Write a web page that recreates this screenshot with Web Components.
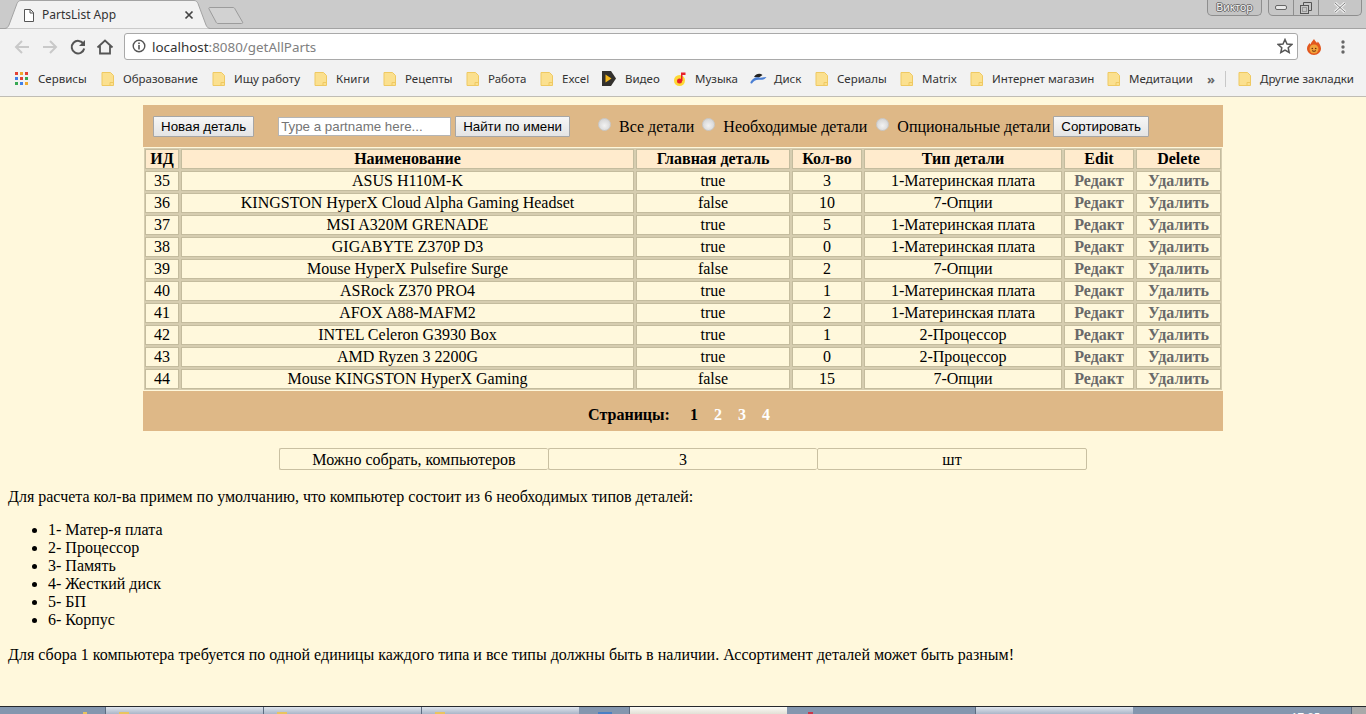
<!DOCTYPE html>
<html lang="ru">
<head>
<meta charset="utf-8">
<title>PartsList App</title>
<style>
    html, body { margin: 0; height: 100%; overflow: hidden; }
</style>
</head>
<body>
<app-shell>
    <browser-chrome slot="top"></browser-chrome>
    <parts-panel></parts-panel>
    <parts-table></parts-table>
    <pager-bar></pager-bar>
    <summary-table></summary-table>
    <info-text></info-text>
    <task-bar slot="bottom"></task-bar>
</app-shell>

<script>
const FOLDER = `<svg width="13" height="14" viewBox="0 0 13 14"><path d="M1 .5h8.5l3 3v10H1z" fill="#fbe08f" stroke="#efc962"/><path d="M9 13.5v-3h3.5" fill="none" stroke="#efc962"/></svg>`;

const BOOKMARK_ICONS = {
    folder: { svg: FOLDER, gap: 9 },
    apps: { svg: `<svg width="13" height="13" viewBox="0 0 13 13"><rect x="0" y="0" width="3" height="3" fill="#e24234"/><rect x="5" y="0" width="3" height="3" fill="#f0a92e"/><rect x="10" y="0" width="3" height="3" fill="#e24234"/><rect x="0" y="5" width="3" height="3" fill="#3f7fe8"/><rect x="5" y="5" width="3" height="3" fill="#e24234"/><rect x="10" y="5" width="3" height="3" fill="#37a853"/><rect x="0" y="10" width="3" height="3" fill="#37a853"/><rect x="5" y="10" width="3" height="3" fill="#3f7fe8"/><rect x="10" y="10" width="3" height="3" fill="#f0a92e"/></svg>`, gap: 10 },
    video: { svg: `<svg width="15" height="15" viewBox="0 0 15 15"><path d="M1 0h9l5 7.500-5 7.500H1z" fill="#33312e"/><path d="M4.500 3.500l6 4-6 4z" fill="#f5b81c"/></svg>`, gap: 9 },
    music: { svg: `<svg width="15" height="15" viewBox="0 0 15 15"><circle cx="6.500" cy="9.500" r="5.500" fill="#fdd835"/><circle cx="6.500" cy="10" r="2.500" fill="#e8202a"/><path d="M8 10V1.500h4.500V4H9.500v6z" fill="#e8202a"/></svg>`, gap: 7 },
    disk: { svg: `<svg width="17" height="11" viewBox="0 0 17 11"><path d="M4 4C6 .5 10 0 12.500 2L9 4.500z" fill="#222"/><path d="M.5 9C2.500 4.500 7 3.500 9 4.500 11 5.300 13.500 4 16.500 4 15 6.500 12 7 9.500 6.800 6 6.500 3.500 8 2 10.500 1 10.800.2 10 .5 9z" fill="#4a7fd4"/></svg>`, gap: 7 }
};

// [подпись, иконка, ширина элемента]
const BOOKMARKS = [
    ['Сервисы', 'apps', 86],
    ['Образование', 'folder', 111],
    ['Ищу работу', 'folder', 102],
    ['Книги', 'folder', 69],
    ['Рецепты', 'folder', 83],
    ['Работа', 'folder', 74],
    ['Excel', 'folder', 61],
    ['Видео', 'video', 72],
    ['Музыка', 'music', 77],
    ['Диск', 'disk', 65],
    ['Сериалы', 'folder', 85],
    ['Matrix', 'folder', 70],
    ['Интернет магазин', 'folder', 137],
    ['Медитации', 'folder', 99]
];

const PARTS = [
    [35, 'ASUS H110M-K', 'true', 3, '1-Материнская плата'],
    [36, 'KINGSTON HyperX Cloud Alpha Gaming Headset', 'false', 10, '7-Опции'],
    [37, 'MSI A320M GRENADE', 'true', 5, '1-Материнская плата'],
    [38, 'GIGABYTE Z370P D3', 'true', 0, '1-Материнская плата'],
    [39, 'Mouse HyperX Pulsefire Surge', 'false', 2, '7-Опции'],
    [40, 'ASRock Z370 PRO4', 'true', 1, '1-Материнская плата'],
    [41, 'AFOX A88-MAFM2', 'true', 2, '1-Материнская плата'],
    [42, 'INTEL Celeron G3930 Box', 'true', 1, '2-Процессор'],
    [43, 'AMD Ryzen 3 2200G', 'true', 0, '2-Процессор'],
    [44, 'Mouse KINGSTON HyperX Gaming', 'false', 15, '7-Опции']
];

class AppShell extends HTMLElement {
    constructor() {
        super();
        this.attachShadow({ mode: 'open' });
        this.shadowRoot.innerHTML = `
            <style>
                :host {
                    display: flex;
                    flex-direction: column;
                    height: 714px;
                    overflow: hidden;
                    background: #fff8dc;
                    color: #000;
                    font: 16px "Liberation Serif", "Times New Roman", serif;
                }
                main {
                    flex: 1;
                    min-height: 0;
                    padding-top: 8px;
                }
            </style>
            <slot name="top"></slot>
            <main><slot></slot></main>
            <slot name="bottom"></slot>
        `;
    }
}

class BrowserChrome extends HTMLElement {
    constructor() {
        super();
        this.attachShadow({ mode: 'open' });
        this.shadowRoot.innerHTML = `
            <style>
                :host {
                    display: block;
                    font: 12px "Noto Sans", "Open Sans", sans-serif;
                    color: #333;
                    background: #f2f2f2;
                    border-bottom: 1px solid #c0bdb4;
                }
                .strip {
                    position: relative;
                    display: flex;
                    justify-content: flex-end;
                    height: 29px;
                    box-sizing: border-box;
                    background: #cbcbcb;
                    border-bottom: 1px solid #a3a3a3;
                }
                .tab {
                    position: absolute;
                    left: 0;
                    top: 0;
                    width: 245px;
                    height: 29px;
                }
                .title {
                    position: absolute;
                    left: 42px;
                    top: 6px;
                    font-size: 12px;
                    color: #333;
                }
                .win {
                    display: flex;
                    gap: 6px;
                    padding-right: 4px;
                    height: 16px;
                }
                .user {
                    width: 53px;
                    height: 15px;
                    border: 1px solid #8e8e8e;
                    border-top: 0;
                    border-radius: 0 0 5px 5px;
                    background: #c4c4c4;
                    color: #f4f4f4;
                    font-size: 10.5px;
                    line-height: 14px;
                    text-align: center;
                    text-shadow: 1px 0 #6a6a6a, -1px 0 #6a6a6a, 0 1px #6a6a6a, 0 -1px #6a6a6a;
                }
                .ctrl {
                    display: flex;
                    height: 15px;
                    border: 1px solid #8e8e8e;
                    border-top: 0;
                    border-radius: 0 0 5px 5px;
                    background: #c6c6c6;
                }
                .ctrl span {
                    display: flex;
                    align-items: center;
                    justify-content: center;
                    height: 15px;
                    border-left: 1px solid #8e8e8e;
                }
                .ctrl span:first-child { border-left: 0; }
                .toolbar {
                    display: flex;
                    align-items: center;
                    height: 34px;
                }
                .nav {
                    display: flex;
                    width: 124px;
                    box-sizing: border-box;
                    padding: 1px 0 0 13px;
                    gap: 10px;
                }
                .nav svg { display: block; }
                .omni {
                    display: flex;
                    align-items: center;
                    width: 1174px;
                    height: 27px;
                    box-sizing: border-box;
                    background: #fff;
                    border: 1px solid #a9a9a9;
                    border-radius: 3px;
                    padding: 0 4px 0 7px;
                    font: 13.4px "Noto Sans", "Open Sans", sans-serif;
                }
                .url { flex: 1; margin-left: 6px; padding-top: 2px; color: #808080; white-space: nowrap; }
                .url b { font-weight: normal; color: #333; }
                .ext {
                    flex: 1;
                    display: flex;
                    align-items: center;
                    padding: 1px 0 0 9px;
                    gap: 20px;
                }
                .bookmarks {
                    display: flex;
                    align-items: center;
                    height: 33px;
                    padding: 0 0 2px 15px;
                    box-sizing: border-box;
                }
                .more {
                    width: 18px;
                    font-size: 13px;
                    font-weight: bold;
                    color: #666;
                    margin-left: 1px;
                }
                .sep {
                    width: 1px;
                    height: 16px;
                    background: #c8c8c8;
                    margin-right: 12px;
                }
            </style>
            <div class="strip">
                <svg class="tab" viewBox="0 0 245 29">
                    <path d="M0 28.500h4.500C7 28.500 8 27 9 25L17 3.500C18 1.500 19 .5 21 .5h173c2 0 3 1 4 3l8 21.500c1 2 2 3.500 4.500 3.500" fill="#f2f2f2" stroke="#a3a3a3"/>
                    <path d="M24.500 9.500h6l3 3v9h-9z M30 9.500v3.500h3.500" fill="#fff" stroke="#555"/>
                    <path d="M185.500 11.500l7 7m0-7l-7 7" stroke="#444" stroke-width="1.700" fill="none"/>
                    <path d="M210 7.500h23c1 0 1.500.5 2 1.500l7.500 13c.5 1 0 1.500-1 1.500H218c-1 0-1.500-.5-2-1.500L209 9c-.5-1 0-1.500 1-1.500z" fill="#d2d2d2" stroke="#9c9c9c"/>
                </svg>
                <span class="title">PartsList App</span>
                <div class="win">
                    <div class="user">Виктор</div>
                    <div class="ctrl">
                        <span style="width:24px"><svg width="13" height="7" viewBox="0 0 13 7"><rect x=".5" y="1.500" width="11" height="4" rx="1.500" fill="#e8e8e8" stroke="#666"/></svg></span>
                        <span style="width:24px"><svg width="12" height="12" viewBox="0 0 12 12"><path d="M3.500 3V.5h8v8H9" fill="none" stroke="#555"/><rect x=".5" y="3.500" width="8" height="8" fill="none" stroke="#555"/><rect x="2.500" y="5.500" width="4" height="4" fill="none" stroke="#999"/></svg></span>
                        <span style="width:42px"><svg width="12" height="11" viewBox="0 0 12 11"><path d="M1 1l10 9M11 1L1 10" stroke="#f0f0f0" stroke-width="3"/><path d="M1 1l10 9M11 1L1 10" stroke="#666" stroke-width=".8"/></svg></span>
                    </div>
                </div>
            </div>
            <div class="toolbar">
                <div class="nav">
                    <svg width="18" height="18" viewBox="0 0 18 18"><path d="M16 9H3M9 3L3 9l6 6" fill="none" stroke="#c9c9c9" stroke-width="2"/></svg>
                    <svg width="18" height="18" viewBox="0 0 18 18"><path d="M2 9h13M9 3l6 6-6 6" fill="none" stroke="#c9c9c9" stroke-width="2"/></svg>
                    <svg width="18" height="18" viewBox="0 0 18 18"><path d="M14.500 6A6.300 6.300 0 1 0 15.200 10.500" fill="none" stroke="#555" stroke-width="2"/><path d="M16 2v6h-6z" fill="#555"/></svg>
                    <svg width="18" height="18" viewBox="0 0 18 18" style="margin-left:-1px"><path d="M1.500 9.500L9 2.500l7.500 7M4 8v7.500h10V8" fill="none" stroke="#555" stroke-width="1.800"/></svg>
                </div>
                <div class="omni">
                    <svg width="14" height="14" viewBox="0 0 14 14"><circle cx="7" cy="7" r="5.800" fill="none" stroke="#555" stroke-width="1.400"/><rect x="6.200" y="6" width="1.600" height="4.500" fill="#555"/><rect x="6.200" y="3.500" width="1.600" height="1.600" fill="#555"/></svg>
                    <span class="url"><b>localhost</b>:8080/getAllParts</span>
                    <svg width="16" height="16" viewBox="0 0 16 16"><path d="M8 1.500l2 4.500 4.800.5-3.600 3.200 1 4.800L8 12.100 3.800 14.500l1-4.800L1.200 6.500 6 6z" fill="none" stroke="#555" stroke-width="1.500"/></svg>
                </div>
                <div class="ext">
                    <svg width="14" height="16" viewBox="0 0 14 16"><path d="M7 0c1 2 2 2.500 3 4 .5-.5.7-1 .7-1.500C12.500 4.500 14 7 14 9.500 14 13 11 16 7 16S0 13 0 9.500C0 7 1.500 5.500 2.500 4c.3.700.5 1 1 1.500C4 3.500 5.500 2 7 0z" fill="#e2571e"/><circle cx="7" cy="10" r="4.500" fill="#f2a33a"/><circle cx="5.300" cy="9.500" r=".8" fill="#6b2d0e"/><circle cx="8.700" cy="9.500" r=".8" fill="#6b2d0e"/><path d="M5 11.500c1 1 3 1 4 0" stroke="#6b2d0e" fill="none"/></svg>
                    <svg width="4" height="14" viewBox="0 0 4 14"><circle cx="2" cy="2" r="1.700" fill="#666"/><circle cx="2" cy="7" r="1.700" fill="#666"/><circle cx="2" cy="12" r="1.700" fill="#666"/></svg>
                </div>
            </div>
            <div class="bookmarks" id="bookmarks"></div>
        `;
    }

    connectedCallback() {
        const bar = this.shadowRoot.getElementById('bookmarks');
        BOOKMARKS.forEach(([label, icon, width]) => {
            const item = document.createElement('bookmark-item');
            item.setAttribute('icon', icon);
            item.style.width = width + 'px';
            item.textContent = label;
            bar.appendChild(item);
        });
        bar.insertAdjacentHTML('beforeend', '<span class="more">»</span><span class="sep"></span>');
        const other = document.createElement('bookmark-item');
        other.setAttribute('icon', 'folder');
        other.textContent = 'Другие закладки';
        bar.appendChild(other);
    }
}

class BookmarkItem extends HTMLElement {
    constructor() {
        super();
        this.attachShadow({ mode: 'open' });
        this.shadowRoot.innerHTML = `
            <style>
                :host {
                    display: flex;
                    align-items: center;
                    flex: none;
                    white-space: nowrap;
                    font-size: 11.5px;
                    color: #333;
                }
                .icon { display: flex; }
            </style>
            <span class="icon"></span><slot></slot>
        `;
    }

    connectedCallback() {
        const icon = BOOKMARK_ICONS[this.getAttribute('icon')];
        const box = this.shadowRoot.querySelector('.icon');
        box.innerHTML = icon.svg;
        box.style.marginRight = icon.gap + 'px';
    }
}

class PartsPanel extends HTMLElement {
    constructor() {
        super();
        this.attachShadow({ mode: 'open' });
        this.shadowRoot.innerHTML = `
            <style>
                :host {
                    display: flex;
                    align-items: center;
                    box-sizing: border-box;
                    width: 1080px;
                    height: 42px;
                    margin: 0 auto;
                    padding: 1px 0 0 10px;
                    background: #deb887;
                    white-space: nowrap;
                }
                button {
                    height: 21px;
                    padding: 0 7px;
                    font: 13.33px "Liberation Sans", Arial, sans-serif;
                    color: #000;
                    background: linear-gradient(#f6f6f6, #e4e4e4);
                    border: 1px solid #a6a6a6;
                    border-radius: 1px;
                }
                input[type=text] {
                    box-sizing: border-box;
                    width: 173px;
                    height: 19px;
                    margin: 0 4px 0 24px;
                    padding: 1px 2px;
                    border: 1px solid #b5b5b5;
                    background: #fff;
                    font: 13.33px "Liberation Sans", Arial, sans-serif;
                }
                input[type=text]::placeholder { color: #757575; }
                input[type=radio] {
                    appearance: none;
                    width: 13px;
                    height: 13px;
                    margin: 0 8px 4px 0;
                    border-radius: 50%;
                    border: 1px solid #c9c9c9;
                    box-sizing: border-box;
                    background: radial-gradient(circle at 50% 60%, #f2f2f2, #cdcdcd);
                }
                label { display: flex; align-items: center; margin-right: 8px; }
                label + label { margin-right: 9px; }
                label + label + label { margin-right: 3px; }
                .filters { display: flex; align-items: center; margin-left: 28px; }
            </style>
            <button>Новая деталь</button>
            <input type="text" placeholder="Type a partname here...">
            <button>Найти по имени</button>
            <div class="filters">
                <label><input type="radio" name="kind">Все детали</label>
                <label><input type="radio" name="kind">Необходимые детали</label>
                <label><input type="radio" name="kind">Опциональные детали</label>
                <button>Сортировать</button>
            </div>
        `;
    }
}

class PartsTable extends HTMLElement {
    constructor() {
        super();
        this.attachShadow({ mode: 'open' });
        const rows = PARTS.map(p => `
            <tr>
                <td>${p[0]}</td><td>${p[1]}</td><td>${p[2]}</td><td>${p[3]}</td><td>${p[4]}</td>
                <td><a href="#">Редакт</a></td><td><a href="#">Удалить</a></td>
            </tr>`).join('');
        this.shadowRoot.innerHTML = `
            <style>
                :host { display: block; width: 1080px; margin: 0 auto; }
                table {
                    width: 1080px;
                    table-layout: fixed;
                    border-collapse: separate;
                    border-spacing: 2px;
                }
                th, td {
                    padding: 0;
                    height: 18px;
                    text-align: center;
                    border: 1px solid #c4bc9e;
                    box-shadow: 0 0 0 1px #d6cdb0;
                    background: #fff8dc;
                    white-space: nowrap;
                }
                th { background: #ffebcd; }
                a { color: #696969; font-weight: bold; text-decoration: none; }
            </style>
            <table>
                <colgroup>
                    <col style="width:34px"><col style="width:453px"><col style="width:154px"><col style="width:70px"><col style="width:198px"><col style="width:70px"><col style="width:85px">
                </colgroup>
                <thead>
                    <tr><th>ИД</th><th>Наименование</th><th>Главная деталь</th><th>Кол-во</th><th>Тип детали</th><th>Edit</th><th>Delete</th></tr>
                </thead>
                <tbody>${rows}</tbody>
            </table>
        `;
    }
}

class PagerBar extends HTMLElement {
    constructor() {
        super();
        this.attachShadow({ mode: 'open' });
        this.shadowRoot.innerHTML = `
            <style>
                :host {
                    display: flex;
                    align-items: center;
                    justify-content: center;
                    gap: 16px;
                    box-sizing: border-box;
                    width: 1080px;
                    height: 40px;
                    margin: 0 auto;
                    padding: 7px 8px 0 0;
                    background: #deb887;
                    font-weight: bold;
                }
                .label { margin-right: 4px; }
                a { color: #fff; text-decoration: none; }
                a.current { color: #000; }
            </style>
            <span class="label">Страницы:</span>
            <a class="current" href="#">1</a><a href="#">2</a><a href="#">3</a><a href="#">4</a>
        `;
    }
}

class SummaryTable extends HTMLElement {
    constructor() {
        super();
        this.attachShadow({ mode: 'open' });
        this.shadowRoot.innerHTML = `
            <style>
                :host {
                    display: grid;
                    grid-template-columns: 269px 269px 270px;
                    width: 808px;
                    margin: 17px auto 0;
                }
                div {
                    box-sizing: border-box;
                    height: 22px;
                    line-height: 21px;
                    text-align: center;
                    border: 1px solid #c9c0a2;
                    border-right-width: 0;
                    border-radius: 2px;
                }
                div:first-child { padding-right: 2px; }
                div:last-child { border-right-width: 1px; }
            </style>
            <div>Можно собрать, компьютеров</div><div>3</div><div>шт</div>
        `;
    }
}

class InfoText extends HTMLElement {
    constructor() {
        super();
        this.attachShadow({ mode: 'open' });
        this.shadowRoot.innerHTML = `
            <style>
                :host { display: block; padding: 0 8px; }
                p { margin: 18px 0 15px; }
                p + ul + p { margin-top: 17px; }
                ul { margin: 0; padding-left: 40px; }
            </style>
            <p>Для расчета кол-ва примем по умолчанию, что компьютер состоит из 6 необходимых типов деталей:</p>
            <ul>
                <li>1- Матер-я плата</li>
                <li>2- Процессор</li>
                <li>3- Память</li>
                <li>4- Жесткий диск</li>
                <li>5- БП</li>
                <li>6- Корпус</li>
            </ul>
            <p>Для сбора 1 компьютера требуется по одной единицы каждого типа и все типы должны быть в наличии. Ассортимент деталей может быть разным!</p>
        `;
    }
}

class TaskBar extends HTMLElement {
    constructor() {
        super();
        this.attachShadow({ mode: 'open' });
        this.shadowRoot.innerHTML = `
            <style>
                :host {
                    display: flex;
                    flex: none;
                    height: 8px;
                    box-sizing: border-box;
                    overflow: hidden;
                    border-top: 1px solid #26282c;
                    background: #8496ae;
                    font: 11.5px "Noto Sans", sans-serif;
                }
                .b {
                    flex: none;
                    width: 158px;
                    box-sizing: border-box;
                    border-left: 1px solid #5d6b80;
                    background: linear-gradient(#dfe4ec, #aab6c8);
                }
                .b.on { background: linear-gradient(#fbfaf5, #e2e0d6); }
                .gap { flex: none; box-sizing: border-box; }
                i {
                    display: block;
                    width: 10px;
                    height: 2px;
                    margin: 5px 0 0 13px;
                    background: #e9c45f;
                }
                .clock {
                    margin-left: 158px;
                    width: 61px;
                    color: #fff;
                    line-height: 20px;
                }
                .show {
                    width: 14px;
                    margin-left: auto;
                    background: #a9a9a9;
                    border-left: 1px solid #5d6b80;
                }
            </style>
            <div class="gap" style="width:105px"><i style="width:4px;margin-left:83px"></i></div>
            <div class="b"><i></i></div><div class="b"><i></i></div><div class="b"><i></i></div>
            <div class="gap" style="width:50px"><i style="width:14px;margin-left:19px;background:#4a7fc4"></i></div>
            <div class="b on"></div>
            <div class="gap" style="width:188px"><i style="width:5px;margin-left:21px;background:#c8374a"></i></div>
            <div class="b"></div>
            <div class="clock">17:05</div>
            <div class="show"></div>
        `;
    }
}

customElements.define('app-shell', AppShell);
customElements.define('bookmark-item', BookmarkItem);
customElements.define('browser-chrome', BrowserChrome);
customElements.define('parts-panel', PartsPanel);
customElements.define('parts-table', PartsTable);
customElements.define('pager-bar', PagerBar);
customElements.define('summary-table', SummaryTable);
customElements.define('info-text', InfoText);
customElements.define('task-bar', TaskBar);
</script>
</body>
</html>
